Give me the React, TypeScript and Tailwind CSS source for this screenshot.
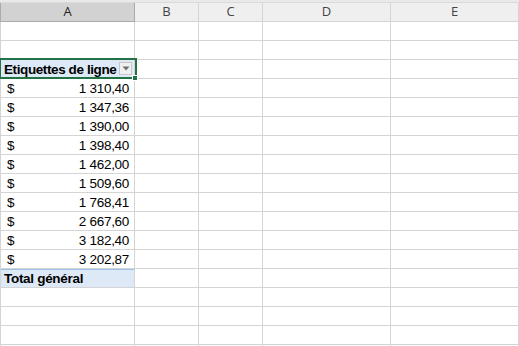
const cols = [
  { key: 'A', w: 'w-[135px]' },
  { key: 'B', w: 'w-[64px]' },
  { key: 'C', w: 'w-[64px]' },
  { key: 'D', w: 'w-[128px]' },
  { key: 'E', w: 'w-[128px]' },
];

const values = [
  '1 310,40',
  '1 347,36',
  '1 390,00',
  '1 398,40',
  '1 462,00',
  '1 509,60',
  '1 768,41',
  '2 667,60',
  '3 182,40',
  '3 202,87',
];

function EmptyCells() {
  return (
    <>
      {cols.slice(1).map((c) => (
        <div key={c.key} className={`${c.w} shrink-0 h-full border-r border-[#d4d4d4]`} />
      ))}
    </>
  );
}

function Row({ children, className = '' }: { children?: React.ReactNode; className?: string }) {
  return <div className={`flex h-[19px] border-b border-[#d4d4d4] ${className}`}>{children}</div>;
}

export default function App() {
  return (
    <div className="relative w-[519px] h-[346px] overflow-hidden bg-white font-['Liberation_Sans',sans-serif] text-[13.5px] text-black">
      {/* top strip */}
      <div className="h-[3px] bg-[#e9e9e9] border-b border-[#dadada]" />

      {/* column headers */}
      <div className="flex h-[19px] bg-[#efefef] font-['Open_Sans',sans-serif] text-[13px] text-[#444]">
        {cols.map((c) => (
          <div
            key={c.key}
            className={`${c.w} shrink-0 flex items-center justify-center border-r border-b ${
              c.key === 'A'
                ? 'bg-[#d2d2d2] border-[#ababab] border-l text-[#222]'
                : 'border-[#d4d4d4] border-b-[#d4d4d4]'
            }`}
          >
            {c.key}
          </div>
        ))}
      </div>

      <div className="border-l border-[#d4d4d4]">
        <Row>
          <div className="w-[134px] shrink-0 border-r border-[#d4d4d4]" />
          <EmptyCells />
        </Row>
        <Row>
          <div className="w-[134px] shrink-0 border-r border-[#d4d4d4]" />
          <EmptyCells />
        </Row>

        {/* pivot header */}
        <Row>
          <div className="w-[134px] shrink-0 bg-[#dde9f6] border-r border-[#d4d4d4] flex items-center pl-[3px] font-bold leading-none pt-[2px] tracking-[-0.4px]">
            Etiquettes de ligne
          </div>
          <EmptyCells />
        </Row>

        {values.map((v) => (
          <Row key={v}>
            <div className="w-[134px] shrink-0 border-r border-[#d4d4d4] flex items-center justify-between pl-[6px] pr-[5px] leading-none pt-[2px]">
              <span>$</span>
              <span className="tracking-[-0.3px]">{v}</span>
            </div>
            <EmptyCells />
          </Row>
        ))}

        <div className="flex h-[19px] border-b border-[#d4d4d4]">
          <div className="w-[134px] shrink-0 bg-[#dde9f6] border-t border-t-[#9bc2e6] border-r border-r-[#d4d4d4] flex items-center pl-[3px] font-bold leading-none pt-[1px] tracking-[-0.3px]">
            Total général
          </div>
          <EmptyCells />
        </div>

        {[0, 1, 2, 3].map((i) => (
          <Row key={i}>
            <div className="w-[134px] shrink-0 border-r border-[#d4d4d4]" />
            <EmptyCells />
          </Row>
        ))}
      </div>

      {/* dropdown button */}
      <div className="absolute left-[119px] top-[62px] w-[13px] h-[13px] bg-[#f0f0f0] border border-[#c6c6c6] flex items-center justify-center">
        <svg width="8" height="5" viewBox="0 0 8 5">
          <path d="M0.5 0.5 L7.5 0.5 L4 4.5 Z" fill="#707070" />
        </svg>
      </div>

      {/* selection */}
      <div className="absolute left-[-1px] top-[58px] w-[138px] h-[21px] border-2 border-[#217346] pointer-events-none" />
      <div className="absolute left-[132px] top-[75px] w-[6px] h-[6px] bg-[#217346] border border-white" />
    </div>
  );
}
